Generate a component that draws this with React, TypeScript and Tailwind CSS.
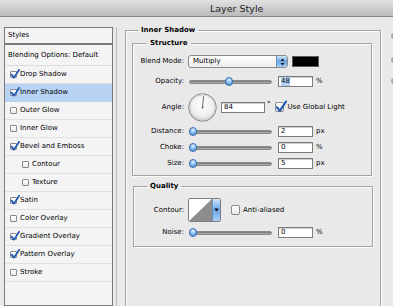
import React from 'react';

const font = { fontFamily: '"DejaVu Sans", "Lucida Grande", Verdana, sans-serif' };

function Box({ checked, size = 7, bigCheck = false }: { checked?: boolean; size?: number; bigCheck?: boolean }) {
  return (
    <span
      className={
        'relative shrink-0 border border-[#8a8a8a] bg-gradient-to-b from-[#ffffff] to-[#e9e9e9] rounded-[1px] ' +
        (size === 7 ? 'w-[7px] h-[7px]' : 'w-[9px] h-[10px] rounded-[2px]')
      }
    >
      {checked && (
        <svg
          className={bigCheck ? 'absolute left-[-1px] top-[-3px]' : 'absolute left-[-1px] top-[-3px]'}
          width={bigCheck ? 12 : 10}
          height={bigCheck ? 13 : 10}
          viewBox="0 0 10 10"
        >
          <path d="M1.6 5.6 L4 8.6 L9.2 0.8" fill="none" stroke="#1b57b4" strokeWidth="1.7" strokeLinecap="round" strokeLinejoin="round" />
        </svg>
      )}
    </span>
  );
}

const items: { label: string; checked?: boolean; selected?: boolean; indent?: boolean }[] = [
  { label: 'Drop Shadow', checked: true },
  { label: 'Inner Shadow', checked: true, selected: true },
  { label: 'Outer Glow' },
  { label: 'Inner Glow' },
  { label: 'Bevel and Emboss', checked: true },
  { label: 'Contour', indent: true },
  { label: 'Texture', indent: true },
  { label: 'Satin', checked: true },
  { label: 'Color Overlay' },
  { label: 'Gradient Overlay', checked: true },
  { label: 'Pattern Overlay', checked: true },
  { label: 'Stroke' },
];

function Slider({ pos }: { pos: number }) {
  return (
    <div className="relative w-[83px] h-[11px] flex items-center">
      <div className="w-full h-[4px] rounded-full bg-gradient-to-b from-[#6f6f6f] to-[#b9b9b9] border border-[#8a8a8a]" />
      <span
        className="absolute top-[1px] w-[8px] h-[9px] rounded-full border border-[#3c6fb5] bg-[radial-gradient(circle_at_50%_30%,#e4f2ff_0%,#8cc0f3_45%,#3d7fd0_100%)]"
        style={{ left: pos }}
      />
    </div>
  );
}

function Input({ value, w = 35, sel = false }: { value: string; w?: number; sel?: boolean }) {
  return (
    <div
      className="h-[11px] border border-[#7c7c7c] bg-white flex items-center pl-[2px] shadow-[inset_0_1px_0_#cfcfcf]"
      style={{ width: w }}
    >
      <span className={'leading-[9px] ' + (sel ? 'bg-[#b5d3fb]' : '')}>{value}</span>
    </div>
  );
}

function SliderRow({ label, pos, value, unit, lw = 51, mt }: { label: string; pos: number; value: string; unit: string; lw?: number; mt: string }) {
  return (
    <div className={'flex items-center h-[11px] ' + mt}>
      <span className="text-right shrink-0" style={{ width: lw }}>{label}</span>
      <span className="ml-[5px]">
        <Slider pos={pos} />
      </span>
      <span className="ml-[6px]">
        <Input value={value} sel={label === 'Opacity:'} />
      </span>
      <span className="ml-[3px]">{unit}</span>
    </div>
  );
}

const etched = 'border border-[#a2a2a2] shadow-[1px_1px_0_#fbfbfb,inset_1px_1px_0_#fbfbfb]';

export default function App() {
  return (
    <div className="w-[393px] h-[306px] overflow-hidden bg-[#e9e9e9] flex flex-col text-[7px] leading-[9px] text-black" style={font}>
      <div className="h-[17px] shrink-0 border-b border-[#878787] bg-gradient-to-b from-[#e2e2e2] to-[#bababa] flex items-center pl-[210px] text-[9.5px] text-[#1c1c1c]">
        Layer Style
      </div>
      <div className="flex flex-1 min-h-0 pt-[10px]">
        <div className="ml-[4px] w-[109px] flex flex-col shrink-0">
          <div className="h-[17px] border border-[#7a7a7a] bg-[#f4f4f4] pl-[3px] flex items-center">Styles</div>
          <div className="flex-1 border border-[#7a7a7a] bg-[#f4f4f4]">
            <div className="h-[21px] border-b border-[#dcdcdc] pl-[3px] flex items-center">Blending Options: Default</div>
            {items.map((it) => (
              <div
                key={it.label}
                className={
                  'h-[18px] border-b flex items-center gap-[3px] ' +
                  (it.indent ? 'pl-[17px] ' : 'pl-[5px] ') +
                  (it.selected ? 'bg-[#b8d3f4] border-[#b8d3f4]' : 'border-[#e0e0e0]')
                }
              >
                <Box checked={it.checked} />
                <span>{it.label}</span>
              </div>
            ))}
          </div>
        </div>
        <div className="w-px ml-[3px] bg-[#bdbdbd] shrink-0" />
        <fieldset className={'ml-[8px] mt-[-1px] w-[256px] h-[320px] shrink-0 ' + etched}>
          <legend className="ml-[12px] px-[3px] font-bold leading-[8px]">Inner Shadow</legend>
          <fieldset className={'ml-[6px] mt-[5px] w-[240px] pb-[6px] ' + etched}>
            <legend className="ml-[14px] px-[3px] font-bold leading-[8px]">Structure</legend>
            <div className="flex items-center h-[13px] mt-[8px]">
              <span className="w-[51px] text-right shrink-0">Blend Mode:</span>
              <div className="ml-[4px] w-[100px] h-[13px] rounded-[3px] border border-[#8a8a8a] bg-gradient-to-b from-white to-[#ececec] flex items-center overflow-hidden">
                <span className="flex-1 pl-[4px]">Multiply</span>
                <span className="w-[11px] h-full bg-gradient-to-b from-[#cfe4fb] via-[#6aa6e8] to-[#a9d0f8] border-l border-[#6b8fbd] flex items-center justify-center">
                  <svg width="5" height="8" viewBox="0 0 5 8">
                    <path d="M0.5 3 L2.5 0.6 L4.5 3 Z M0.5 5 L2.5 7.4 L4.5 5 Z" fill="#1b1b1b" />
                  </svg>
                </span>
              </div>
              <span className="ml-[4px] w-[27px] h-[11px] bg-black border border-[#5a5a5a]" />
            </div>
            <SliderRow label="Opacity:" pos={36} value="48" unit="%" mt="mt-[8px]" />
            <div className="flex items-center h-[30px] mt-[5px]">
              <span className="w-[51px] text-right shrink-0">Angle:</span>
              <svg className="ml-[4px] shrink-0" width="29" height="29" viewBox="0 0 29 29">
                <defs>
                  <radialGradient id="dg" cx="50%" cy="40%" r="60%">
                    <stop offset="0%" stopColor="#ffffff" />
                    <stop offset="70%" stopColor="#eeeeee" />
                    <stop offset="100%" stopColor="#cfcfcf" />
                  </radialGradient>
                </defs>
                <circle cx="14.5" cy="14.5" r="13.8" fill="url(#dg)" stroke="#8a8a8a" strokeWidth="1" />
                <circle cx="14.5" cy="14.5" r="12.6" fill="none" stroke="#c9c9c9" strokeWidth="0.8" />
                <line x1="14.5" y1="14.5" x2="15.6" y2="3.2" stroke="#5a5a5a" strokeWidth="0.9" />
                <circle cx="14.5" cy="14.5" r="1" fill="#5a5a5a" />
              </svg>
              <span className="ml-[4px]">
                <Input value="84" w={44} />
              </span>
              <span className="ml-[2px] self-start mt-[8px]">°</span>
              <span className="ml-[4px] flex items-center">
                <Box checked size={9} bigCheck />
              </span>
              <span className="ml-[4px]">Use Global Light</span>
            </div>
            <SliderRow label="Distance:" pos={0} value="2" unit="px" mt="mt-[4px]" />
            <SliderRow label="Choke:" pos={0} value="0" unit="%" mt="mt-[5px]" />
            <SliderRow label="Size:" pos={0} value="5" unit="px" mt="mt-[5px]" />
          </fieldset>
          <fieldset className={'ml-[7px] mt-[6px] w-[240px] pb-[8px] ' + etched}>
            <legend className="ml-[13px] px-[3px] font-bold leading-[8px]">Quality</legend>
            <div className="flex items-center h-[24px] mt-[8px]">
              <span className="w-[50px] text-right shrink-0">Contour:</span>
              <div className="ml-[4px] flex h-[24px] border border-[#7f7f7f] rounded-[2px] overflow-hidden">
                <svg width="23" height="22" viewBox="0 0 23 22">
                  <rect width="23" height="22" fill="#ffffff" />
                  <polygon points="0,22 23,0 23,22" fill="#8d8d8d" />
                </svg>
                <span className="w-[8px] h-full bg-gradient-to-b from-[#cfe4fb] via-[#6aa6e8] to-[#a9d0f8] border-l border-[#6b8fbd] flex items-center justify-center">
                  <svg width="5" height="4" viewBox="0 0 5 4">
                    <path d="M0.3 0.5 L4.7 0.5 L2.5 3.6 Z" fill="#111" />
                  </svg>
                </span>
              </div>
              <span className="ml-[10px] flex items-center">
                <Box size={9} />
              </span>
              <span className="ml-[3px]">Anti-aliased</span>
            </div>
            <SliderRow label="Noise:" pos={0} value="0" unit="%" lw={50} mt="mt-[5px]" />
          </fieldset>
        </fieldset>
        <div className="ml-[10px] flex flex-col shrink-0">
          <span className="mt-[6px] w-[3px] h-[6px] rounded-l-full bg-[#a3a7ad]" />
          <span className="mt-[18px] w-[3px] h-[6px] rounded-l-full bg-[#a3a7ad]" />
          <span className="mt-[15px] w-[3px] h-[6px] rounded-l-full bg-[#a3a7ad]" />
        </div>
      </div>
    </div>
  );
}
